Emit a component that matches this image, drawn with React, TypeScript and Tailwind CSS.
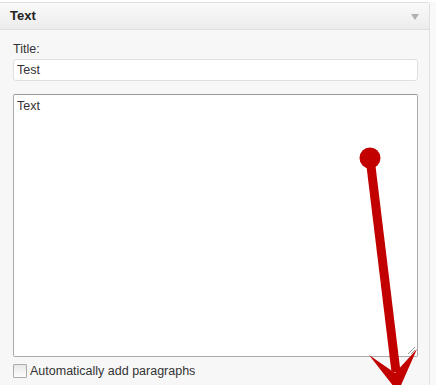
import React from "react";

// Red annotation arrow drawn over the widget
function Arrow() {
  return (
    <svg
      className="absolute left-0 top-0 pointer-events-none"
      width={436}
      height={385}
      viewBox="0 0 436 385"
    >
      <line x1={370} y1={158} x2={396} y2={372} stroke="#c20000" strokeWidth={9} />
      <circle cx={370} cy={158} r={10.5} fill="#c20000" />
      <polygon points="369,355 395,373 417,349 398,392" fill="#c20000" />
    </svg>
  );
}

export default function App() {
  return (
    <div
      className="relative w-[436px] h-[385px] overflow-hidden bg-[#f9f9f9] text-[12.5px] text-[#333]"
      style={{ fontFamily: '"Liberation Sans", Arial, sans-serif' }}
    >
      <div className="absolute top-0 left-0 right-0 h-[2px] bg-white" />
      <div className="mt-[2px] w-[430px] h-[400px] border border-l-0 border-[#dfdfdf] rounded-tr-[3px] bg-[#f7f7f7]">
        {/* Header */}
        <div className="h-[27px] flex items-center justify-between pl-[10px] pr-[10px] border-b border-[#dfdfdf] bg-gradient-to-b from-[#f9f9f9] to-[#ececec]">
          <span className="font-bold text-[13px] text-[#222]">Text</span>
          <span className="mt-[2px] w-0 h-0 border-l-[4px] border-r-[4px] border-t-[6px] border-l-transparent border-r-transparent border-t-[#b0b0b0]" />
        </div>

        {/* Body */}
        <div className="pl-[13px] pr-[11px] pt-[12px]">
          <label className="block leading-[15px]">Title:</label>
          <div className="mt-[2px] h-[22px] w-[405px] border border-[#dfdfdf] rounded-[3px] bg-white flex items-center px-[3px] text-[#333]">
            Test
          </div>
          <div className="mt-[13px] h-[263px] w-[405px] border border-[#aaa] border-t-[#999] rounded-[2px] bg-white relative px-[3px] pt-[3px] leading-[16px]">
            Text
            <svg className="absolute right-[2px] bottom-[2px]" width={8} height={8} viewBox="0 0 8 8">
              <line x1={1} y1={8} x2={8} y2={1} stroke="#999" />
              <line x1={4} y1={8} x2={8} y2={4} stroke="#999" />
            </svg>
          </div>
          <div className="mt-[5px] flex items-center gap-[3px]">
            <span className="inline-block w-[14px] h-[14px] border border-[#aaa] rounded-[1px] bg-gradient-to-b from-[#e8e8e8] to-[#fdfdfd]" />
            <span>Automatically add paragraphs</span>
          </div>
        </div>
      </div>
      <Arrow />
    </div>
  );
}
